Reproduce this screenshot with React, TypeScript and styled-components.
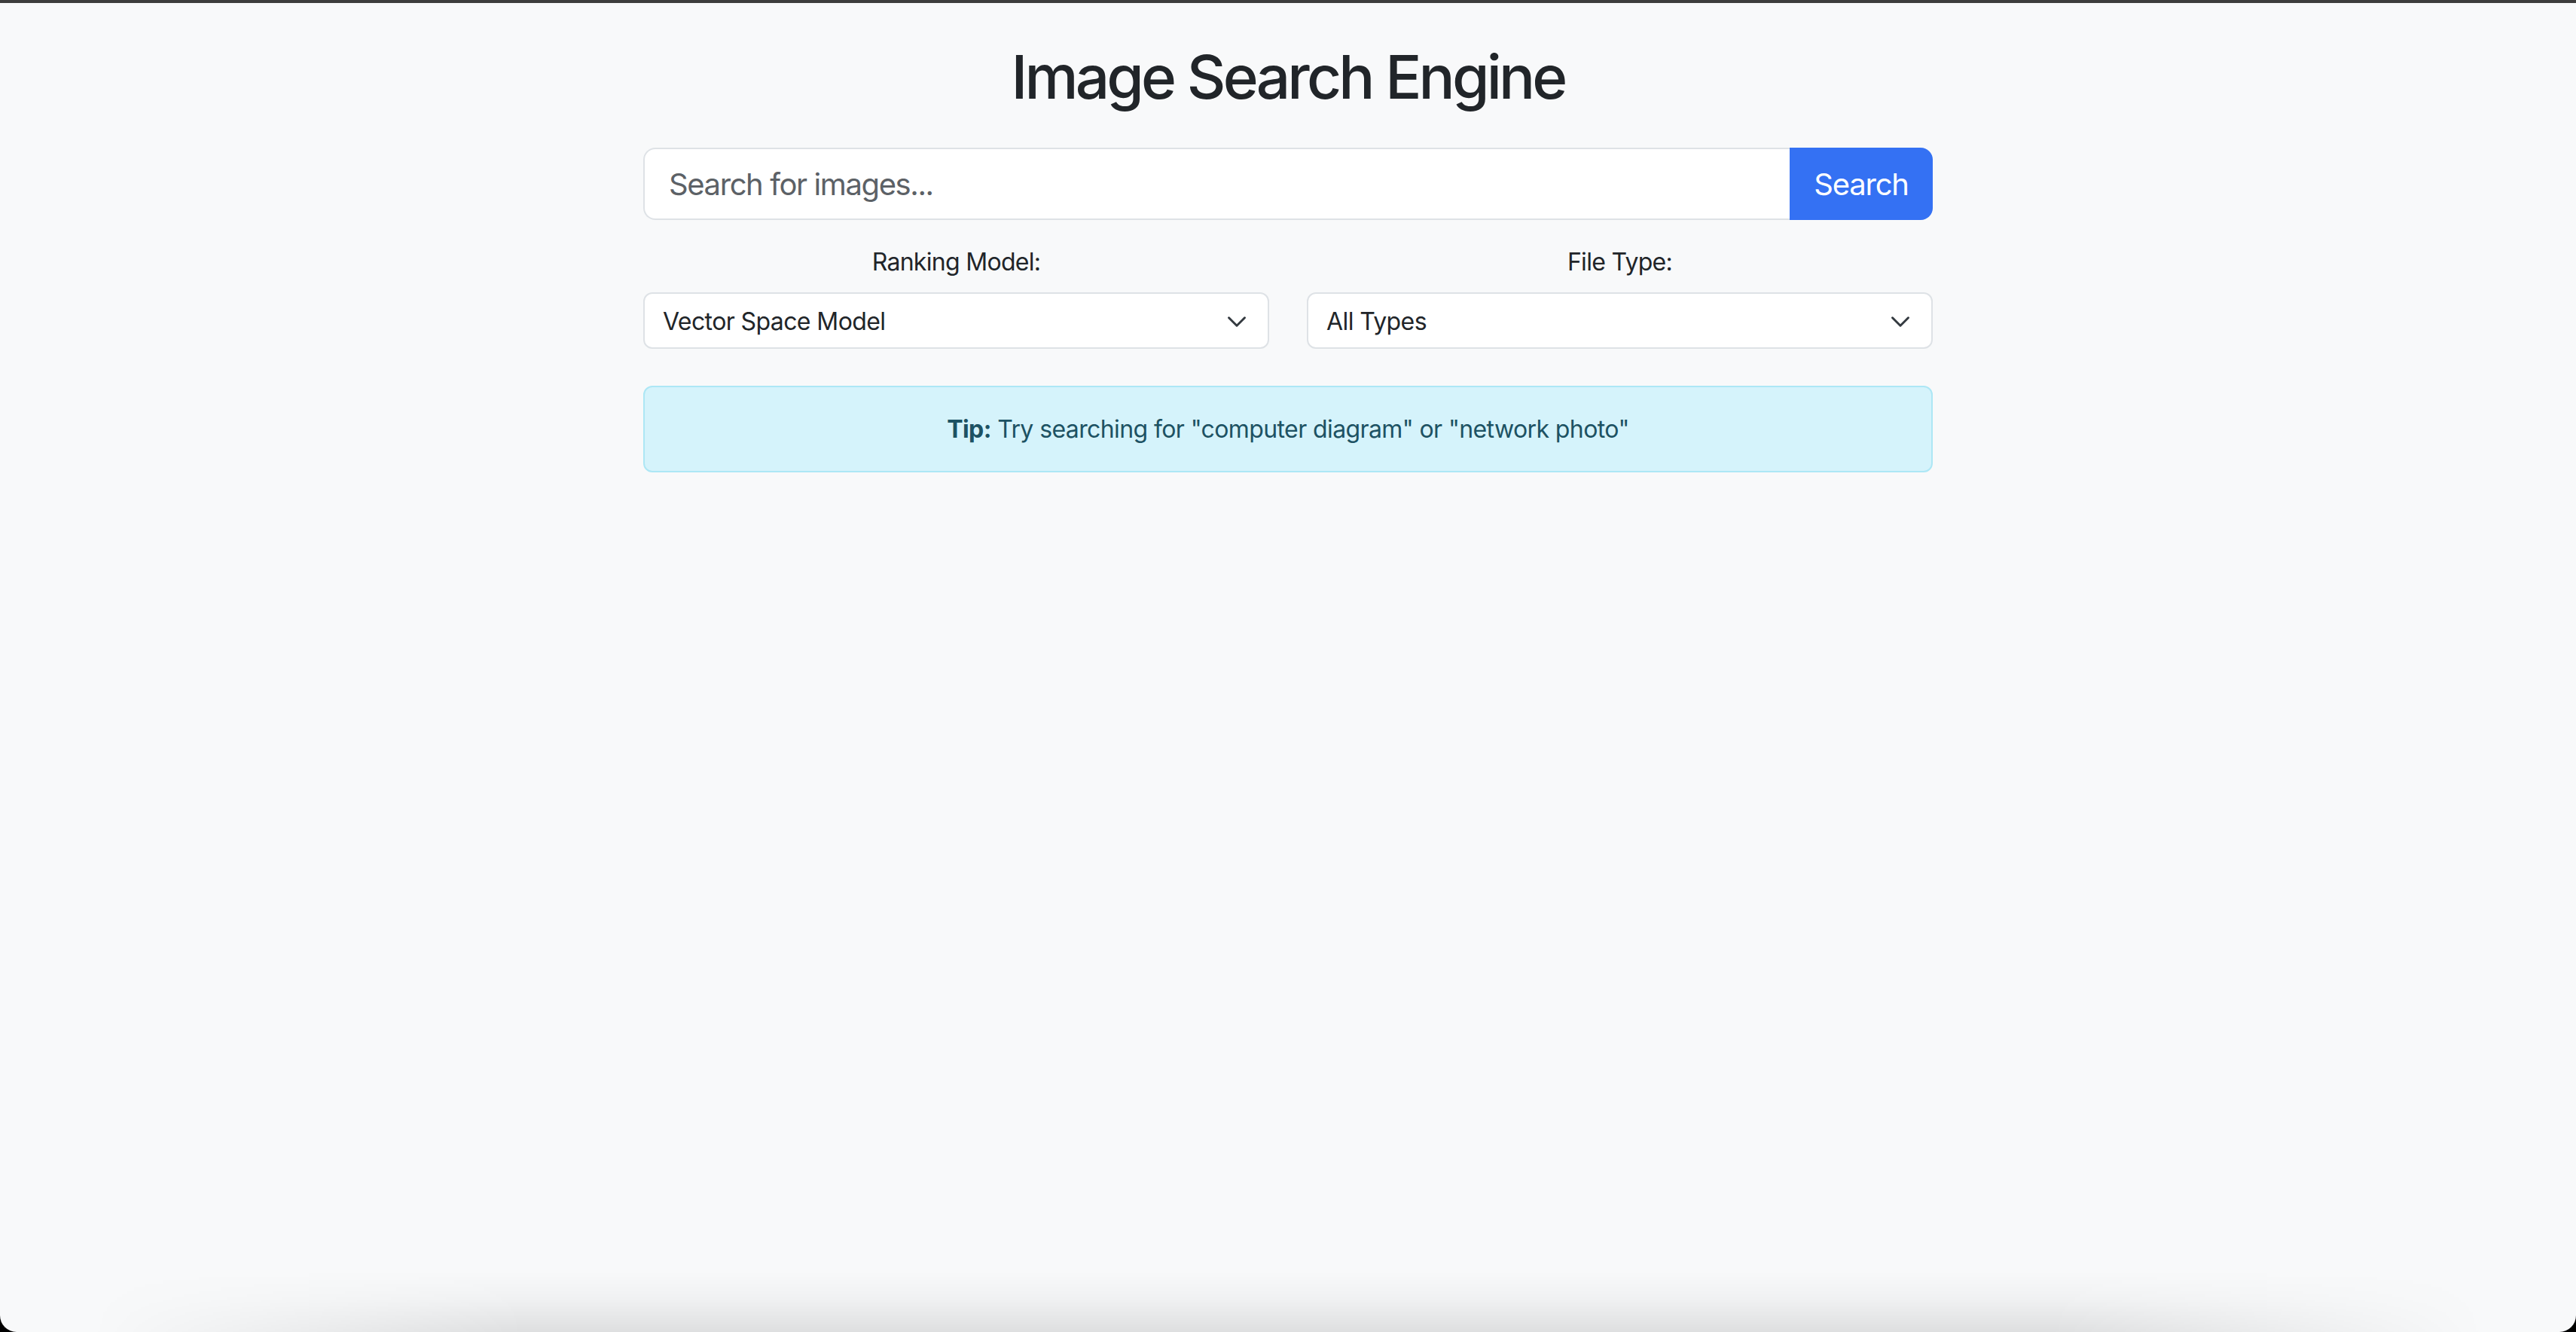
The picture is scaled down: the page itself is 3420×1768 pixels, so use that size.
import React from "react";
import styled, { createGlobalStyle } from "styled-components";

const GlobalStyle = createGlobalStyle`
  html, body {
    margin: 0;
    padding: 0;
    background: #000;
  }
  body {
    font-family: Inter, "Noto Sans", "Liberation Sans", sans-serif;
    color: #212529;
  }
  * { box-sizing: border-box; }
`;

const Window = styled.div`
  position: relative;
  min-height: 1768px;
  background: #f8f9fa;
  border-top: 4px solid #3d3d3d;
  border-radius: 0 0 22px 22px;
  overflow: hidden;
`;

const BottomShade = styled.div`
  position: absolute;
  left: 0;
  right: 0;
  bottom: 0;
  height: 80px;
  pointer-events: none;
  background: linear-gradient(to top, rgba(0, 0, 0, 0.1), rgba(0, 0, 0, 0.03) 55%, rgba(0, 0, 0, 0));
  -webkit-mask-image: linear-gradient(to right, transparent 120px, #000 700px, #000 calc(100% - 700px), transparent calc(100% - 120px));
  mask-image: linear-gradient(to right, transparent 120px, #000 700px, #000 calc(100% - 700px), transparent calc(100% - 120px));
`;

const Container = styled.main`
  width: 1712px;
  margin: 0 auto;
  padding-top: 50px;
`;

const Title = styled.h1`
  margin: 0 0 46px;
  font-size: 80px;
  font-weight: 500;
  line-height: 1.2;
  text-align: center;
  color: #212529;
  letter-spacing: -3.8px;
`;

const InputGroup = styled.form`
  display: flex;
  height: 96px;
  margin-bottom: 32px;
`;

const SearchInput = styled.input`
  flex: 1;
  min-width: 0;
  padding: 0 32px;
  font-family: inherit;
  font-size: 40px;
  letter-spacing: -1.4px;
  color: #212529;
  background: #fff;
  border: 2px solid #dee2e6;
  border-right: none;
  border-radius: 16px 0 0 16px;
  outline: none;
  &::placeholder {
    color: #5c6166;
  }
`;

const SearchButton = styled.button`
  width: 190px;
  padding: 0;
  font-family: inherit;
  font-size: 40px;
  letter-spacing: -1.2px;
  color: #fff;
  background: #3471f3;
  border: none;
  border-radius: 0 16px 16px 0;
  cursor: pointer;
`;

const FilterRow = styled.div`
  display: grid;
  grid-template-columns: 1fr 1fr;
  column-gap: 50px;
  margin-bottom: 49px;
`;

const Field = styled.div`
  display: flex;
  flex-direction: column;
`;

const Label = styled.label`
  display: block;
  margin-bottom: 16px;
  font-size: 32px;
  line-height: 48px;
  letter-spacing: -0.7px;
  text-align: center;
  color: #212529;
`;

const SelectBox = styled.button`
  display: flex;
  align-items: center;
  justify-content: space-between;
  height: 75px;
  padding: 2px 27px 0 24px;
  font-family: inherit;
  font-size: 32px;
  letter-spacing: -0.6px;
  color: #212529;
  text-align: left;
  background: #fff;
  border: 2px solid #dee2e6;
  border-radius: 12px;
  cursor: pointer;
`;

const Chevron = styled.svg`
  width: 28px;
  height: 28px;
  flex: none;
`;

const Alert = styled.div`
  padding: 32px 32px 31px;
  font-size: 32px;
  line-height: 48px;
  letter-spacing: -0.6px;
  text-align: center;
  color: #1d5263;
  background: #d5f3fb;
  border: 2px solid #ade7f5;
  border-radius: 12px;
  strong {
    font-weight: 700;
  }
`;

const ChevronIcon = () => (
  <Chevron viewBox="0 0 16 16" aria-hidden="true">
    <path
      d="m2 5 6 6 6-6"
      fill="none"
      stroke="#343a40"
      strokeWidth="1.7"
      strokeLinecap="round"
      strokeLinejoin="round"
    />
  </Chevron>
);

const Select = ({ value }: { value: string }) => (
  <SelectBox type="button">
    <span>{value}</span>
    <ChevronIcon />
  </SelectBox>
);

export default function App() {
  return (
    <>
      <GlobalStyle />
      <Window>
        <Container>
          <Title>Image Search Engine</Title>
          <InputGroup onSubmit={(e) => e.preventDefault()}>
            <SearchInput placeholder="Search for images..." />
            <SearchButton type="submit">Search</SearchButton>
          </InputGroup>
          <FilterRow>
            <Field>
              <Label>Ranking Model:</Label>
              <Select value="Vector Space Model" />
            </Field>
            <Field>
              <Label>File Type:</Label>
              <Select value="All Types" />
            </Field>
          </FilterRow>
          <Alert>
            <strong>Tip:</strong> Try searching for "computer diagram" or "network photo"
          </Alert>
        </Container>
        <BottomShade />
      </Window>
    </>
  );
}
